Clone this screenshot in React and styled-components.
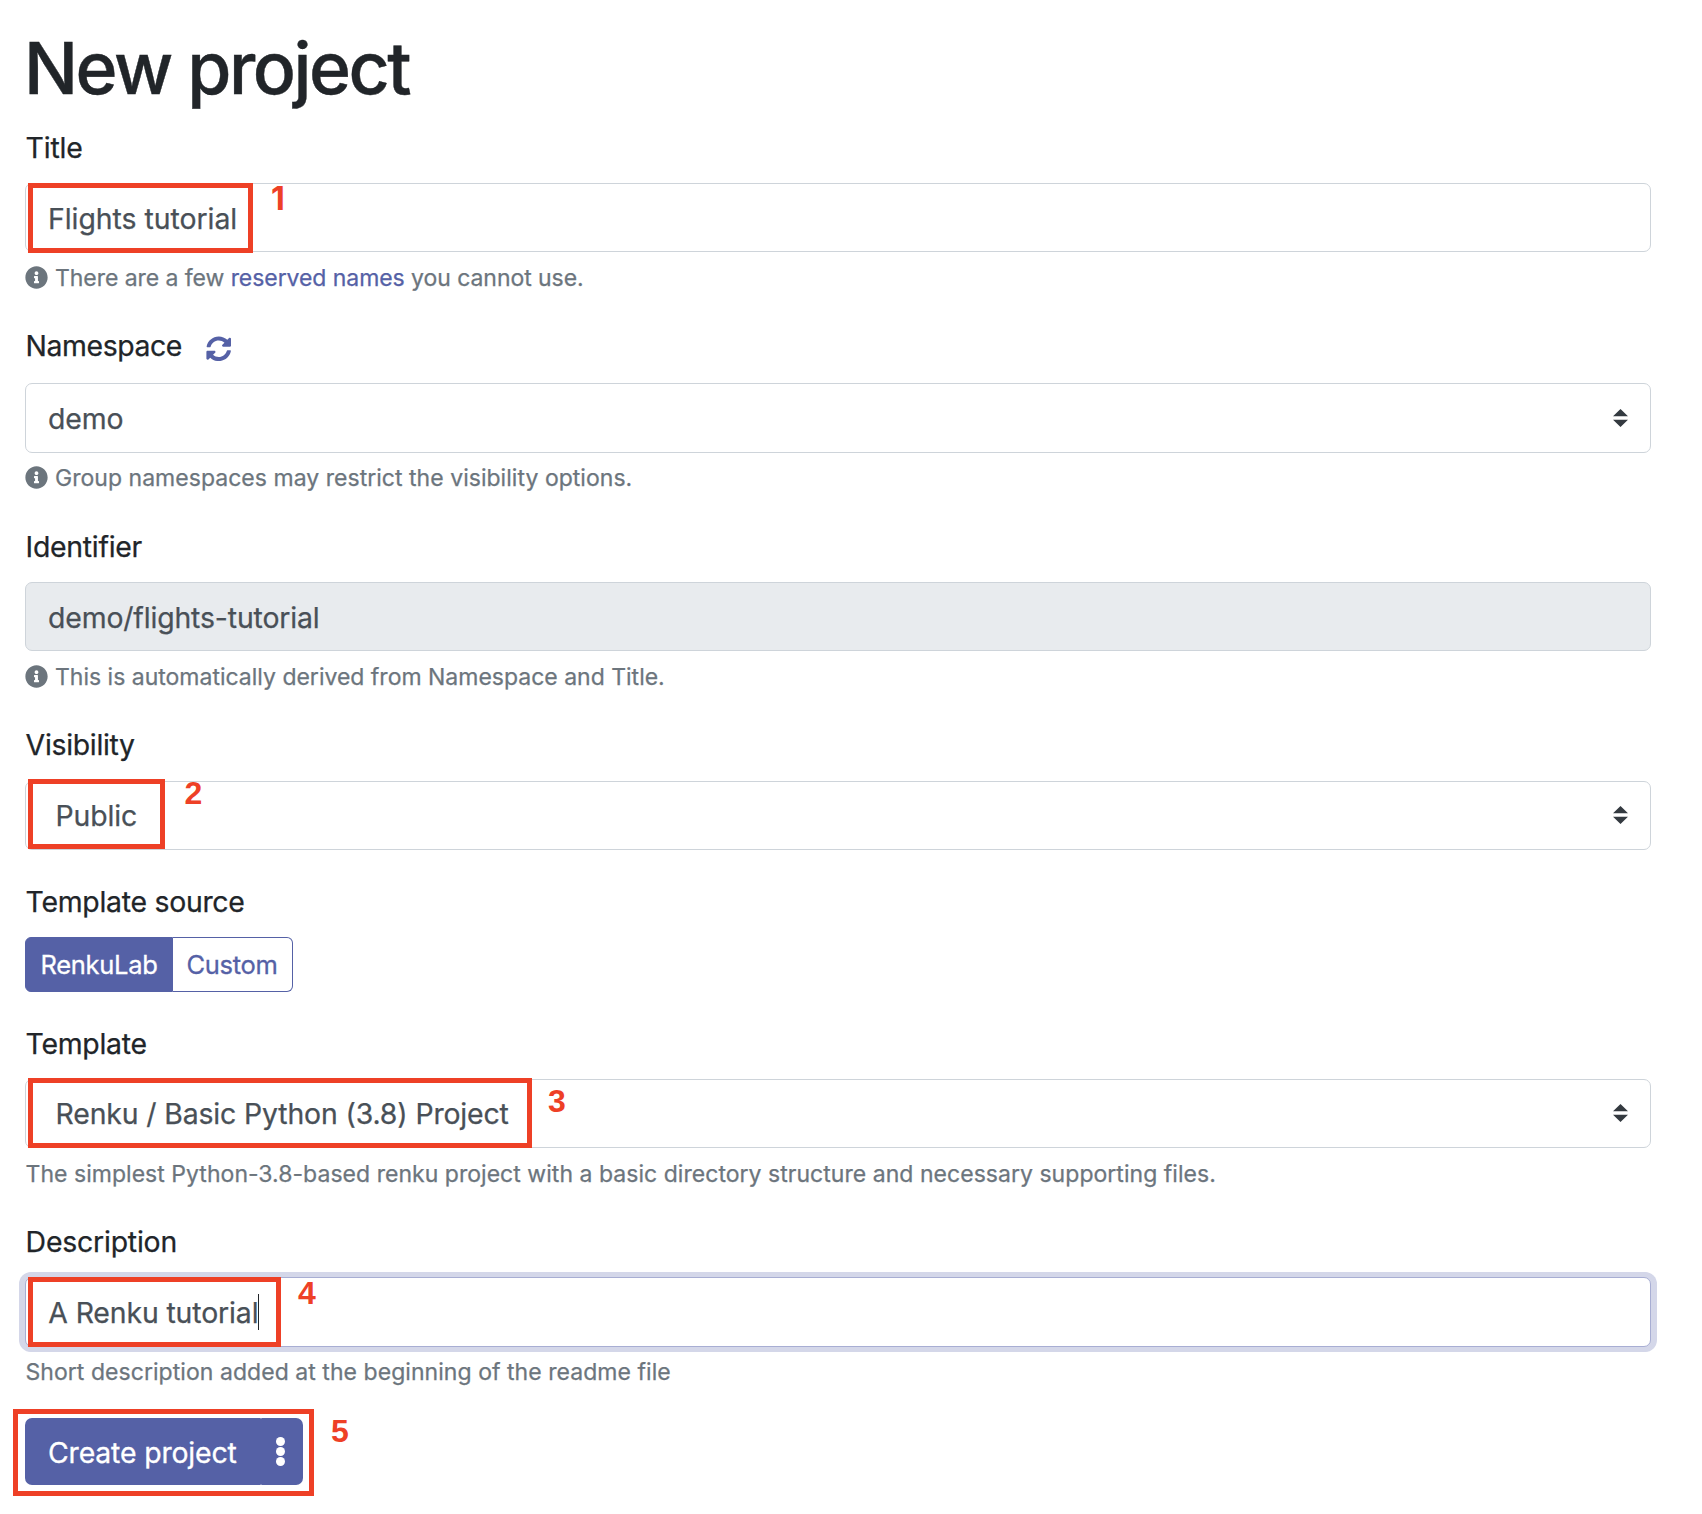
import React from "react";
import styled, { createGlobalStyle, css } from "styled-components";
import { FaInfoCircle, FaSyncAlt } from "react-icons/fa";

const color = {
  primary: "#5561a6",
  text: "#212529",
  input: "#495057",
  muted: "#6c757d",
  border: "#ced4da",
  marker: "#ee4026",
};

const GlobalStyle = createGlobalStyle`
  *, *::before, *::after { box-sizing: border-box; }
  body {
    margin: 0;
    background: #fff;
    color: ${color.text};
    font-family: Inter, "Liberation Sans", sans-serif;
    font-size: 28.4px;
    line-height: 36px;
    -webkit-text-stroke: 0.25px currentColor;
  }
`;

const Page = styled.main`
  width: 1702px;
  min-height: 1514px;
  padding: 25px 51px 0 25px;
`;

const Heading = styled.h1`
  margin: 0 0 19px -1px;
  font-size: 71.5px;
  font-weight: 500;
  line-height: 86px;
  letter-spacing: -2.5px;
  -webkit-text-stroke: 0.4px currentColor;
`;

const Field = styled.section`
  display: flex;
  flex-direction: column;
  align-items: flex-start;
  margin-bottom: ${({ $after }) => $after}px;
`;

const Label = styled.label`
  display: flex;
  align-items: center;
  height: 36px;
  margin-bottom: ${({ $gap }) => $gap ?? 17}px;
  padding-left: 0.6px;
  letter-spacing: ${({ $tracking }) => $tracking ?? -0.27}px;
`;

const RefreshIcon = styled(FaSyncAlt)`
  width: 25.5px;
  height: 25.5px;
  margin: 5px 0 0 24px;
  color: ${color.primary};
`;

const ControlWrap = styled.div`
  position: relative;
  width: ${({ $fit }) => ($fit ? "auto" : "100%")};
`;

const Control = styled.div`
  display: flex;
  align-items: center;
  width: 100%;
  height: ${({ $tall }) => ($tall ? 70 : 69)}px;
  padding: ${({ $drop }) => $drop ?? 0}px 22px 0 ${({ $inset }) => $inset ?? 22}px;
  border: 1px solid ${color.border};
  border-radius: 7px;
  background: ${({ $disabled }) => ($disabled ? "#e8ebee" : "#fff")};
  color: ${color.input};
  letter-spacing: ${({ $tracking }) => $tracking ?? 0}px;
  ${({ $focused }) =>
    $focused &&
    css`
      border-color: #a8aed3;
      box-shadow: -1px 0 0 5px #d4d7e9, 1px 0 0 5px #d4d7e9;
    `}
`;

const Arrows = styled.svg`
  width: 15px;
  height: 18px;
  margin: 0 0 ${({ $lift }) => $lift ?? 2}px auto;
  fill: #343a40;
`;

const TextCursor = styled.span`
  width: 1px;
  height: 36px;
  margin-bottom: 2px;
  background: ${color.text};
`;

const Help = styled.div`
  display: flex;
  align-items: center;
  height: 30px;
  margin-top: ${({ $gap }) => $gap ?? 11}px;
  padding-left: ${({ $indent }) => $indent ?? 0}px;
  color: ${color.muted};
  font-size: 23px;
  line-height: 30px;
  letter-spacing: ${({ $tracking }) => $tracking ?? 0}px;
  white-space: nowrap;
`;

const InfoIcon = styled(FaInfoCircle)`
  width: 23px;
  height: 23px;
  margin: 0 7px 1px 0;
`;

const Link = styled.a`
  color: ${color.primary};
  text-decoration: none;
`;

const Toggle = styled.div`
  display: flex;
  height: 55px;
`;

const ToggleOption = styled.button`
  width: ${({ $width }) => $width}px;
  padding: 0 ${({ $active }) => ($active ? 0 : 1)}px 0 0;
  border: 1px solid ${color.primary};
  border-left-width: ${({ $active }) => ($active ? 1 : 0)}px;
  border-radius: ${({ $active }) => ($active ? "6px 0 0 6px" : "0 6px 6px 0")};
  background: ${({ $active }) => ($active ? color.primary : "#fff")};
  color: ${({ $active }) => ($active ? "#fff" : color.primary)};
  font: 400 25.5px/31px Inter, sans-serif;
  letter-spacing: -0.3px;
  -webkit-text-stroke: 0.3px currentColor;
`;

const ButtonGroup = styled.div`
  display: flex;
  width: 278px;
  height: 67px;
`;

const SubmitButton = styled.button`
  width: 236px;
  padding: 2px 0 0 23px;
  border: 0;
  border-radius: 7px 1px 1px 7px;
  background: ${color.primary};
  color: #fff;
  font: 400 28.4px/36px Inter, sans-serif;
  letter-spacing: -0.16px;
  text-align: left;
  -webkit-text-stroke: 0.3px currentColor;
`;

const MoreButton = styled.button`
  display: flex;
  flex: 1;
  flex-direction: column;
  align-items: center;
  justify-content: center;
  gap: 1px;
  padding: 0 4px 0 0;
  border: 0;
  border-radius: 1px 7px 7px 1px;
  background: ${color.primary};
`;

const Dot = styled.span`
  width: 9px;
  height: 9px;
  border-radius: 50%;
  background: #fff;
`;

const MarkerFrame = styled.span`
  position: absolute;
  left: ${({ $x }) => $x ?? 3}px;
  top: ${({ $y }) => $y ?? 0}px;
  width: ${({ $w }) => $w}px;
  height: ${({ $h }) => $h ?? 70}px;
  border: 5px solid ${color.marker};
  pointer-events: none;
`;

const MarkerNumber = styled.span`
  position: absolute;
  left: ${({ $x }) => $x}px;
  top: ${({ $y }) => $y}px;
  color: ${color.marker};
  font: 700 32px/36px ${({ $plain }) => ($plain ? "Inter" : '"Liberation Sans"')}, Arial, sans-serif;
  -webkit-text-stroke: 0;
  pointer-events: none;
`;

const SelectArrows = ({ lift }) => (
  <Arrows $lift={lift} viewBox="0 0 4 5" preserveAspectRatio="none">
    <path d="M2 0 0 2h4zm0 5L0 3h4z" />
  </Arrows>
);

export default function App() {
  return (
    <>
      <GlobalStyle />
      <Page>
        <Heading>New project</Heading>

        <Field $after={35}>
          <Label $tracking={-0.2}>Title</Label>
          <ControlWrap>
            <Control $drop={2} $tracking={-0.03}>Flights tutorial</Control>
            <MarkerFrame $w={225} />
            <MarkerNumber $plain $x={246} $y={-2}>1</MarkerNumber>
          </ControlWrap>
          <Help $tracking={-0.06}>
            <InfoIcon />
            <span>
              There are a few <Link>reserved names</Link> you cannot use.
            </span>
          </Help>
        </Field>

        <Field $after={36}>
          <Label $gap={19} $tracking={-0.42}>
            Namespace
            <RefreshIcon />
          </Label>
          <ControlWrap>
            <Control $tall $drop={2} $tracking={-0.1}>
              demo
              <SelectArrows />
            </Control>
          </ControlWrap>
          <Help $gap={10} $tracking={0.03}>
            <InfoIcon />
            Group namespaces may restrict the visibility options.
          </Help>
        </Field>

        <Field $after={35}>
          <Label>Identifier</Label>
          <ControlWrap>
            <Control $disabled $drop={2} $tracking={-0.14}>demo/flights-tutorial</Control>
          </ControlWrap>
          <Help $tracking={-0.005}>
            <InfoIcon />
            This is automatically derived from Namespace and Title.
          </Help>
        </Field>

        <Field $after={34}>
          <Label $gap={18} $tracking={-0.3}>Visibility</Label>
          <ControlWrap>
            <Control $inset={29.5} $tracking={-0.1}>
              Public
              <SelectArrows />
            </Control>
            <MarkerFrame $y={-2} $w={137} />
            <MarkerNumber $x={159.5} $y={-6}>2</MarkerNumber>
          </ControlWrap>
        </Field>

        <Field $after={34}>
          <Label>Template source</Label>
          <Toggle>
            <ToggleOption $active $width={148}>RenkuLab</ToggleOption>
            <ToggleOption $width={120}>Custom</ToggleOption>
          </Toggle>
        </Field>

        <Field $after={35}>
          <Label>Template</Label>
          <ControlWrap>
            <Control $inset={29.5} $tracking={-0.13}>
              Renku / Basic Python (3.8) Project
              <SelectArrows lift={1} />
            </Control>
            <MarkerFrame $y={-1} $w={504} />
            <MarkerNumber $x={523} $y={4}>3</MarkerNumber>
          </ControlWrap>
          <Help $indent={0.5} $tracking={0.035}>
            The simplest Python-3.8-based renku project with a basic directory structure and necessary supporting files.
          </Help>
        </Field>

        <Field $after={31}>
          <Label $tracking={-0.2}>Description</Label>
          <ControlWrap>
            <Control $tall $focused $drop={2} $inset={22.3} $tracking={-0.12}>
              A Renku tutorial
              <TextCursor />
            </Control>
            <MarkerFrame $w={253} />
            <MarkerNumber $x={273} $y={-2}>4</MarkerNumber>
          </ControlWrap>
          <Help $gap={10} $indent={0.5} $tracking={0.05}>
            Short description added at the beginning of the readme file
          </Help>
        </Field>

        <ControlWrap $fit>
          <ButtonGroup>
            <SubmitButton>Create project</SubmitButton>
            <MoreButton aria-label="More options">
              <Dot />
              <Dot />
              <Dot />
            </MoreButton>
          </ButtonGroup>
          <MarkerFrame $x={-12} $y={-9} $w={301} $h={87} />
          <MarkerNumber $x={306} $y={-5}>5</MarkerNumber>
        </ControlWrap>
      </Page>
    </>
  );
}
